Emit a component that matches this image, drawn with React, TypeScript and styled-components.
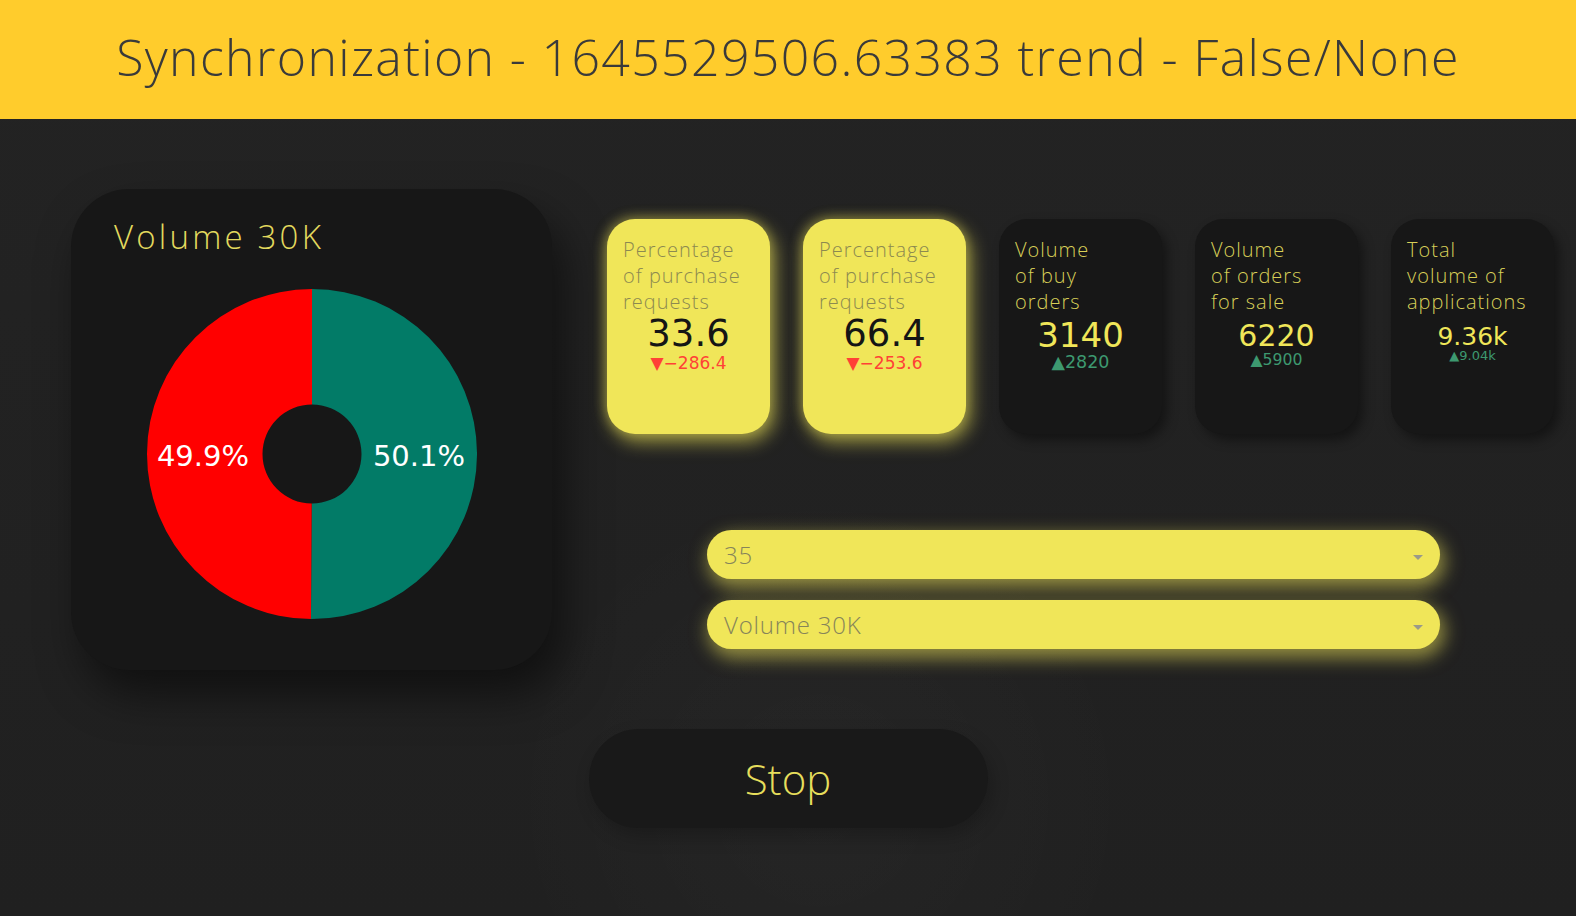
import React from 'react';
import styled, { createGlobalStyle, css } from 'styled-components';

const GlobalStyle = createGlobalStyle`
  html, body { margin: 0; padding: 0; }
  body {
    background: #212121;
    font-family: "Open Sans", "Liberation Sans", sans-serif;
    overflow: hidden;
  }
`;

const Page = styled.div`
  width: 1576px;
  min-height: 916px;
  background:
    radial-gradient(circle at 820px 800px, rgba(255,255,255,0.025) 0, rgba(255,255,255,0) 320px),
    linear-gradient(180deg, #232323 0%, #202020 100%);
`;

const Header = styled.header`
  height: 119px;
  background: #ffcc2c;
  display: flex;
  align-items: center;
  justify-content: center;
`;

const HeaderTitle = styled.h1`
  margin: 0 0 6px 0;
  font-size: 50px;
  font-weight: 300;
  line-height: 1;
  letter-spacing: 1.35px;
  color: #3a3a3a;
`;

const Main = styled.main`
  display: flex;
  flex-direction: column;
`;

const TopRow = styled.div`
  display: flex;
  padding: 70px 0 0 71px;
`;

const PieCard = styled.section`
  width: 481px;
  height: 481px;
  box-sizing: border-box;
  border-radius: 58px;
  background: #171717;
  box-shadow: 12px 24px 44px rgba(0, 0, 0, 0.5);
  display: flex;
  flex-direction: column;
  padding-top: 28px;
`;

const PieTitle = styled.h2`
  margin: 0 0 0 43px;
  font-size: 33px;
  line-height: 40px;
  font-weight: 300;
  letter-spacing: 3.2px;
  color: #e3da5e;
`;

const PieWrap = styled.div`
  align-self: center;
  margin-top: 32px;
  width: 330px;
  height: 330px;
`;

const RightColumn = styled.div`
  display: flex;
  flex-direction: column;
  margin-left: 55px;
  padding-top: 30px;
`;

const CardRow = styled.div`
  display: flex;
  gap: 33px;
`;

const Card = styled.div<{ $tone: 'light' | 'dark' }>`
  width: 163px;
  height: 215px;
  box-sizing: border-box;
  border-radius: 28px;
  padding: 18px 8px 0 16px;
  display: flex;
  flex-direction: column;
  ${(p) =>
    p.$tone === 'light'
      ? css`
          background: #f0e659;
          box-shadow: 4px 7px 18px 1px rgba(240, 230, 89, 0.6), -2px -2px 12px rgba(240, 230, 89, 0.35);
        `
      : css`
          background: #171717;
          box-shadow: 5px 6px 12px rgba(0, 0, 0, 0.42);
        `}
`;

const CardLabel = styled.div<{ $tone: 'light' | 'dark' }>`
  font-size: 20px;
  line-height: 26px;
  font-weight: 300;
  letter-spacing: 1px;
  white-space: nowrap;
  color: ${(p) => (p.$tone === 'light' ? '#8c8950' : '#d8cf57')};
`;

const LabelLine = styled.span`
  display: block;
`;

const NumberBox = styled.div<{ $lift: number }>`
  height: 37px;
  box-sizing: border-box;
  padding-bottom: ${(p) => p.$lift}px;
  margin-left: -8px;
  display: flex;
  align-items: flex-end;
  justify-content: center;
`;

const Value = styled.span<{ $tone: 'light' | 'dark'; $size: number }>`
  font-family: "DejaVu Sans", Verdana, sans-serif;
  font-size: ${(p) => p.$size}px;
  line-height: 1;
  color: ${(p) => (p.$tone === 'light' ? '#151515' : '#f0e659')};
`;

const Delta = styled.div<{ $dir: 'up' | 'down'; $size: number; $gap: number }>`
  margin: ${(p) => p.$gap}px 0 0 -8px;
  text-align: center;
  font-family: "DejaVu Sans", Verdana, sans-serif;
  font-size: ${(p) => p.$size}px;
  line-height: 1;
  color: ${(p) => (p.$dir === 'up' ? '#3d9970' : '#ff4136')};
`;

const Selects = styled.div`
  display: flex;
  flex-direction: column;
  gap: 21px;
  margin: 96px 0 0 100px;
  width: 733px;
`;

const Select = styled.div`
  height: 49px;
  box-sizing: border-box;
  border-radius: 25px;
  background: #f0e659;
  box-shadow: 3px 7px 18px 2px rgba(240, 230, 89, 0.55);
  display: flex;
  align-items: center;
  justify-content: space-between;
  padding: 0 17px;
`;

const SelectValue = styled.span`
  font-size: 24px;
  font-weight: 300;
  letter-spacing: 0.8px;
  color: #86845a;
`;

const Caret = styled.span`
  width: 0;
  height: 0;
  margin-top: 6px;
  border-left: 5px solid transparent;
  border-right: 5px solid transparent;
  border-top: 5px solid #9a9a8a;
`;

const StopButton = styled.button`
  align-self: center;
  margin-top: 59px;
  width: 399px;
  height: 99px;
  border: none;
  border-radius: 50px;
  background: #191919;
  box-shadow: 4px 8px 18px rgba(0, 0, 0, 0.22);
  font-family: "Open Sans", "Liberation Sans", sans-serif;
  font-size: 42px;
  font-weight: 300;
  color: #e6de5c;
  cursor: pointer;
`;

type CardData = {
  tone: 'light' | 'dark';
  lines: string[];
  value: string;
  vs: number;
  lift: number;
  delta: string;
  dir: 'up' | 'down';
  ds: number;
  gap: number;
};

const cards: CardData[] = [
  { tone: 'light', lines: ['Percentage', 'of purchase', 'requests'], value: '33.6', vs: 37, lift: 0, delta: '\u2212286.4', dir: 'down', ds: 17, gap: 3 },
  { tone: 'light', lines: ['Percentage', 'of purchase', 'requests'], value: '66.4', vs: 37, lift: 0, delta: '\u2212253.6', dir: 'down', ds: 17, gap: 3 },
  { tone: 'dark', lines: ['Volume', 'of buy', 'orders'], value: '3140', vs: 34, lift: 0, delta: '2820', dir: 'up', ds: 17.5, gap: 2 },
  { tone: 'dark', lines: ['Volume', 'of orders', 'for sale'], value: '6220', vs: 30, lift: 1, delta: '5900', dir: 'up', ds: 15.7, gap: 0 },
  { tone: 'dark', lines: ['Total', 'volume of', 'applications'], value: '9.36k', vs: 25, lift: 3, delta: '9.04k', dir: 'up', ds: 13, gap: -3 },
];

const CX = 165;
const CY = 165;
const RO = 165;
const RI = 49.5;

function pt(r: number, deg: number) {
  const a = (deg * Math.PI) / 180;
  return [CX + r * Math.sin(a), CY - r * Math.cos(a)];
}

function slice(from: number, to: number) {
  const large = to - from > 180 ? 1 : 0;
  const [x1, y1] = pt(RO, from);
  const [x2, y2] = pt(RO, to);
  const [x3, y3] = pt(RI, to);
  const [x4, y4] = pt(RI, from);
  return `M${x1} ${y1} A${RO} ${RO} 0 ${large} 1 ${x2} ${y2} L${x3} ${y3} A${RI} ${RI} 0 ${large} 0 ${x4} ${y4} Z`;
}

function Donut() {
  const green = 0.501 * 360;
  return (
    <svg width="330" height="330" viewBox="0 0 330 330">
      <path d={slice(0, green)} fill="#027b67" />
      <path d={slice(green, 360)} fill="#ff0000" />
      <text x={56} y={167} fill="#ffffff" fontFamily="DejaVu Sans, Verdana, sans-serif" fontSize="29" textAnchor="middle" dominantBaseline="central">49.9%</text>
      <text x={272} y={167} fill="#ffffff" fontFamily="DejaVu Sans, Verdana, sans-serif" fontSize="29" textAnchor="middle" dominantBaseline="central">50.1%</text>
    </svg>
  );
}

export default function App() {
  return (
    <Page>
      <GlobalStyle />
      <Header>
        <HeaderTitle>Synchronization - 1645529506.63383 trend - False/None</HeaderTitle>
      </Header>
      <Main>
        <TopRow>
          <PieCard>
            <PieTitle>Volume 30K</PieTitle>
            <PieWrap>
              <Donut />
            </PieWrap>
          </PieCard>
          <RightColumn>
            <CardRow>
              {cards.map((c, i) => (
                <Card key={i} $tone={c.tone}>
                  <CardLabel $tone={c.tone}>
                    {c.lines.map((l) => (
                      <LabelLine key={l}>{l}</LabelLine>
                    ))}
                  </CardLabel>
                  <NumberBox $lift={c.lift}>
                    <Value $tone={c.tone} $size={c.vs}>{c.value}</Value>
                  </NumberBox>
                  <Delta $dir={c.dir} $size={c.ds} $gap={c.gap}>
                    {c.dir === 'up' ? '\u25B2' : '\u25BC'}
                    {c.delta}
                  </Delta>
                </Card>
              ))}
            </CardRow>
            <Selects>
              <Select>
                <SelectValue>35</SelectValue>
                <Caret />
              </Select>
              <Select>
                <SelectValue>Volume 30K</SelectValue>
                <Caret />
              </Select>
            </Selects>
          </RightColumn>
        </TopRow>
        <StopButton>Stop</StopButton>
      </Main>
    </Page>
  );
}
